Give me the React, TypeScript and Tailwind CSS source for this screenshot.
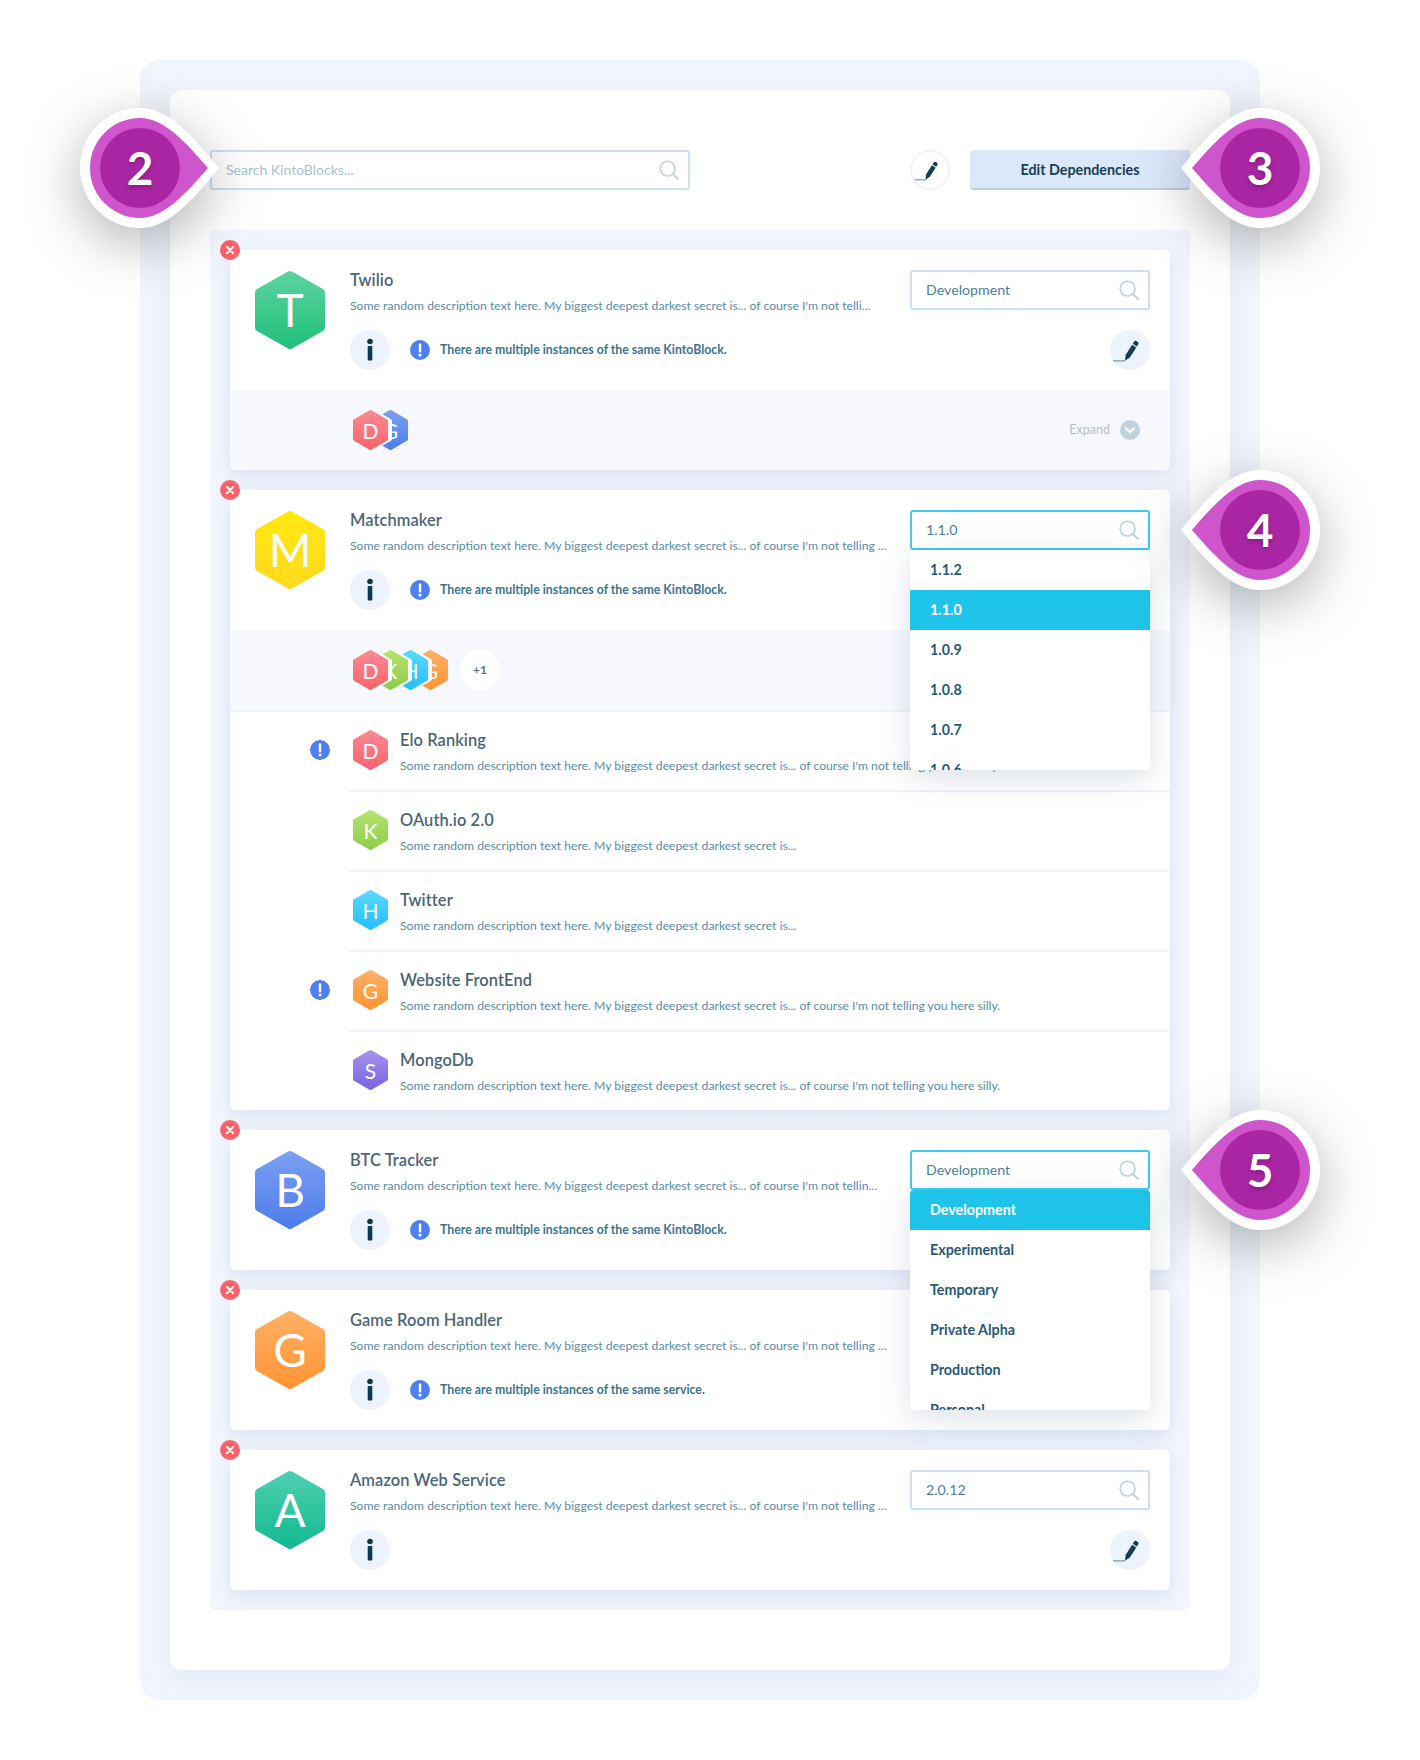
import React from "react";

const DESC = "Some random description text here. My biggest deepest darkest secret is...";
const LONG = `${DESC} of course I'm not telling you here silly.`;

const GRADIENTS: Record<string, [string, string]> = {
  T: ["#5ed3a0", "#1fc07b"],
  M: ["#ffe90f", "#ffd91f"],
  B: ["#7ca0f2", "#4c7cec"],
  G: ["#ffb066", "#ff9433"],
  A: ["#4fd0b0", "#12b98f"],
  D: ["#fb8a95", "#f7636b"],
  K: ["#b8e36f", "#8ccd4a"],
  H: ["#5cd9ff", "#22bffb"],
  S: ["#a592ee", "#7a62e0"],
  g: ["#7ca0f2", "#4c7cec"],
};

const Hexagon: React.FC<{ id: string; letter: string; size: "lg" | "sm"; ring?: boolean }> = ({
  id,
  letter,
  size,
  ring,
}) => {
  const [from, to] = GRADIENTS[id];
  const gid = `hex-${id}-${size}`;
  return (
    <div
      className={`grid place-items-center shrink-0 text-white ${
        size === "lg" ? "w-[70px] h-[78px] mt-[1px] text-[46px]" : "w-[35px] h-[40px] text-[21px]"
      }`}
    >
      <svg viewBox="0 0 70 78" preserveAspectRatio="none" className="[grid-area:1/1] w-full h-full overflow-visible">
        <defs>
          <linearGradient id={gid} x1="35" y1="0" x2="35" y2="78" gradientUnits="userSpaceOnUse">
            <stop offset="0" stopColor={from} />
            <stop offset="1" stopColor={to} />
          </linearGradient>
        </defs>
        {ring && (
          <polygon
            points="35,4 66,21.5 66,56.5 35,74 4,56.5 4,21.5"
            transform="translate(8 0)"
            fill="#ffffff"
            stroke="#ffffff"
            strokeWidth="8"
            strokeLinejoin="round"
          />
        )}
        <polygon
          points="35,4 66,21.5 66,56.5 35,74 4,56.5 4,21.5"
          fill={`url(#${gid})`}
          stroke={`url(#${gid})`}
          strokeWidth="8"
          strokeLinejoin="round"
        />
      </svg>
      <span className="[grid-area:1/1] relative leading-none">{letter}</span>
    </div>
  );
};

const SearchGlyph: React.FC = () => (
  <svg viewBox="0 0 20 20" className="w-[20px] h-[20px] shrink-0" fill="none" stroke="#bfd3e0" strokeWidth="1.6">
    <circle cx="8.6" cy="8.6" r="7.4" />
    <path d="M14 14l5 5" strokeWidth="2" strokeLinecap="round" />
  </svg>
);

const PencilGlyph: React.FC = () => (
  <svg viewBox="0 0 40 40" className="w-[40px] h-[40px]">
    <path d="M3 30.8h12" stroke="#8fb0c4" strokeWidth="1.6" />
    <path d="M15 30.8l.6-5.9 6.5-10.1 4.2 2.7-6.5 10.1z" fill="#123f52" />
    <path d="M22.8 13.8l1.4-2.2c.6-.9 1.6-.9 2.4-.4l1.2.8c.8.5 1 1.6.4 2.4l-1.4 2.1z" fill="#123f52" />
  </svg>
);

const InfoGlyph: React.FC = () => (
  <svg viewBox="0 0 40 40" className="w-[40px] h-[40px]">
    <circle cx="20" cy="11.5" r="2.8" fill="#0e3a50" />
    <rect x="17.7" y="16" width="4.6" height="14.5" fill="#0e3a50" />
  </svg>
);

const WarnGlyph: React.FC = () => (
  <svg viewBox="0 0 20 20" className="w-[20px] h-[20px] shrink-0">
    <circle cx="10" cy="10" r="10" fill="#4f7ff0" />
    <path d="M10 4.4v6.8" stroke="#ffffff" strokeWidth="2.4" strokeLinecap="round" />
    <circle cx="10" cy="14.9" r="1.5" fill="#ffffff" />
  </svg>
);

const RemoveBadge: React.FC = () => (
  <div className="absolute -left-[10px] -top-[10px] w-[20px] h-[20px] rounded-full bg-[#f9636a] flex items-center justify-center">
    <svg viewBox="0 0 10 10" className="w-[10px] h-[10px]">
      <path d="M2 2l6 6M8 2l-6 6" stroke="#ffffff" strokeWidth="2" strokeLinecap="round" />
    </svg>
  </div>
);

const SelectBox: React.FC<{ value: string; active?: boolean; options?: string[]; selected?: string }> = ({
  value,
  active,
  options,
  selected,
}) => (
  <div className="relative w-[240px]">
    <div
      className={`h-[40px] rounded-[3px] border-2 bg-white flex items-center justify-between pl-[14px] pr-[9px] text-[14.2px] text-[#4b7f9c] ${
        active ? "border-[#3ccbf1]" : "border-[#c9e0f4]"
      }`}
    >
      <span>{value}</span>
      <SearchGlyph />
    </div>
    {options && (
      <div className="absolute z-10 left-0 top-full w-[240px] h-[220px] overflow-hidden bg-white rounded-[4px] shadow-[0_8px_30px_rgba(60,90,130,0.18)]">
        {options.map((o) => (
          <div
            key={o}
            className={`h-[40px] shrink-0 flex items-center pl-[20px] pb-[1px] text-[14.3px] font-bold ${
              o === selected ? "bg-[#1fc4ea] text-white" : "text-[#27597a]"
            }`}
          >
            {o}
          </div>
        ))}
      </div>
    )}
  </div>
);

const RoundPencil: React.FC = () => (
  <div className="w-[40px] h-[40px] rounded-full bg-[#edf3fd]">
    <PencilGlyph />
  </div>
);

const Stack: React.FC<{ items: [string, string][]; more?: string }> = ({ items, more }) => (
  <div className="h-full pl-[123px] flex items-center">
    <div className="flex">
      {items.map(([id, letter], i) => (
        <div
          key={id}
          className={`relative ${i > 0 ? "-ml-[15px]" : ""}`}
          style={{ zIndex: items.length - i }}
        >
          <Hexagon id={id} letter={letter} size="sm" ring={i < items.length - 1} />
        </div>
      ))}
    </div>
    {more && (
      <div className="ml-[12px] w-[40px] h-[40px] rounded-full bg-white flex items-center justify-center text-[12px] font-bold text-[#5a7383]">
        {more}
      </div>
    )}
  </div>
);

const CardHead: React.FC<{
  id: string;
  letter: string;
  title: string;
  desc: string;
  warning?: string;
  select: React.ReactNode;
}> = ({ id, letter, title, desc, warning, select }) => (
  <div className="h-[140px] flex pt-[20px] pl-[25px] pr-[20px]">
    <Hexagon id={id} letter={letter} size="lg" />
    <div className="ml-[25px] flex-1 min-w-0">
      <div className="h-[20px] leading-[19px] text-[16.4px] font-semibold tracking-[0.1px] text-[#4a6578]">{title}</div>
      <div className="mt-[6px] h-[20px] leading-[20px] text-[12.2px] text-[#5a8ba8] whitespace-nowrap">{desc}</div>
      <div className="mt-[14px] flex items-center">
        <div className="w-[40px] h-[40px] rounded-full bg-[#edf3fd]">
          <InfoGlyph />
        </div>
        {warning && (
          <div className="ml-[20px] flex items-center gap-[10px]">
            <WarnGlyph />
            <span className="text-[12.3px] font-bold text-[#3d7391]">{warning}</span>
          </div>
        )}
      </div>
    </div>
    <div className="w-[240px] flex flex-col items-end gap-[20px]">
      {select}
      <RoundPencil />
    </div>
  </div>
);

const Dependency: React.FC<{
  id: string;
  letter: string;
  title: string;
  desc: string;
  warn?: boolean;
  last?: boolean;
}> = ({ id, letter, title, desc, warn, last }) => (
  <div className={`flex ${last ? "h-[78px]" : "h-[80px]"}`}>
    <div className="w-[120px] pl-[80px] pt-[28px] shrink-0">{warn && <WarnGlyph />}</div>
    <div className={`flex-1 flex pt-[18px] pl-[3px] ${last ? "" : "border-b-2 border-[#eef3fd]"}`}>
      <Hexagon id={id} letter={letter} size="sm" />
      <div className="ml-[12px]">
        <div className="h-[20px] leading-[19px] text-[16.4px] font-semibold tracking-[0.1px] text-[#4a6578]">{title}</div>
        <div className="mt-[6px] h-[20px] leading-[20px] text-[12.2px] text-[#5a8ba8] whitespace-nowrap">{desc}</div>
      </div>
    </div>
  </div>
);

const Card: React.FC<{ children: React.ReactNode }> = ({ children }) => (
  <div className="relative bg-white rounded-[5px] shadow-[0_6px_20px_rgba(60,100,150,0.12)]">
    <RemoveBadge />
    {children}
  </div>
);

const Callout: React.FC<{ n: string; side: "left" | "right"; pos: string }> = ({ n, side, pos }) => (
  <div className={`absolute z-20 w-[180px] h-[140px] grid place-items-center ${pos}`}>
    <svg
      viewBox="-90 -70 180 140"
      className="[grid-area:1/1] w-[180px] h-[140px] overflow-visible drop-shadow-[0_15px_28px_rgba(0,0,0,0.3)]"
    >
      <g transform={side === "right" ? "scale(-1 1)" : undefined}>
        <path d="M0-60C30-60 54-30 79 0 54 30 30 60 0 60A60 60 0 0 1 0-60Z" fill="#ffffff" />
        <path d="M0-50C25-50 47-24 68 0 47 24 25 50 0 50A50 50 0 0 1 0-50Z" fill="#cf55cc" />
        <circle r="40" fill="#aa25a3" />
      </g>
    </svg>
    <span className="[grid-area:1/1] relative text-[46px] font-bold leading-none text-white [text-shadow:0_2px_4px_rgba(60,0,60,0.35)]">
      {n}
    </span>
  </div>
);

export default function App() {
  return (
    <div className="relative w-[1420px] h-[1760px] bg-white pt-[60px] pl-[140px] [font-family:Lato,sans-serif]">
      <div className="w-[1120px] rounded-[20px] bg-[#f1f5fd] p-[30px]">
        <div className="rounded-[12px] bg-white px-[40px] py-[60px] shadow-[0_10px_30px_rgba(70,110,160,0.08)]">
          <div className="flex items-center h-[40px]">
            <div className="w-[480px] h-[40px] rounded-[3px] border-2 border-[#c9e0f4] flex items-center justify-between pl-[14px] pr-[9px] text-[14px] text-[#a6c2d6]">
              <span className="pb-[2px]">Search KintoBlocks...</span>
              <SearchGlyph />
            </div>
            <div className="ml-[220px] w-[40px] h-[40px] rounded-full border-2 border-[#eef3fd] flex items-center justify-center">
              <PencilGlyph />
            </div>
            <button className="ml-[20px] w-[220px] h-[40px] pt-[1px] rounded-[3px] bg-[#dbe8f9] border-b-2 border-[#bcd0e4] text-[14.3px] font-bold text-[#173f52]">
              Edit Dependencies
            </button>
          </div>

          <div className="mt-[40px] rounded-[5px] bg-[#f1f5fd] p-[20px] flex flex-col gap-[20px]">
            <Card>
              <CardHead
                id="T"
                letter="T"
                title="Twilio"
                desc={`${DESC} of course I'm not telli...`}
                warning="There are multiple instances of the same KintoBlock."
                select={<SelectBox value="Development" />}
              />
              <div className="h-[80px] bg-[#f6f8fd] rounded-b-[5px] flex items-center justify-between pr-[30px]">
                <Stack
                  items={[
                    ["D", "D"],
                    ["g", "G"],
                  ]}
                />
                <div className="flex items-center gap-[10px] text-[12.5px] text-[#b4bfca]">
                  <span className="pt-[1px]">Expand</span>
                  <svg viewBox="0 0 20 20" className="w-[20px] h-[20px]">
                    <circle cx="10" cy="10" r="10" fill="#c2d1de" />
                    <path d="M6 8.5l4 3.5 4-3.5" fill="none" stroke="#ffffff" strokeWidth="2.2" strokeLinecap="round" strokeLinejoin="round" />
                  </svg>
                </div>
              </div>
            </Card>

            <Card>
              <CardHead
                id="M"
                letter="M"
                title="Matchmaker"
                desc={`${DESC} of course I'm not telling ...`}
                warning="There are multiple instances of the same KintoBlock."
                select={
                  <SelectBox
                    value="1.1.0"
                    active
                    selected="1.1.0"
                    options={["1.1.2", "1.1.0", "1.0.9", "1.0.8", "1.0.7", "1.0.6"]}
                  />
                }
              />
              <div className="h-[82px] bg-[#f6f8fd] border-b-2 border-[#eef3fd]">
                <Stack
                  items={[
                    ["D", "D"],
                    ["K", "K"],
                    ["H", "H"],
                    ["G", "G"],
                  ]}
                  more="+1"
                />
              </div>
              <Dependency id="D" letter="D" title="Elo Ranking" desc={LONG} warn />
              <Dependency id="K" letter="K" title="OAuth.io 2.0" desc={DESC} />
              <Dependency id="H" letter="H" title="Twitter" desc={DESC} />
              <Dependency id="G" letter="G" title="Website FrontEnd" desc={LONG} warn />
              <Dependency id="S" letter="S" title="MongoDb" desc={LONG} last />
            </Card>

            <Card>
              <CardHead
                id="B"
                letter="B"
                title="BTC Tracker"
                desc={`${DESC} of course I'm not tellin...`}
                warning="There are multiple instances of the same KintoBlock."
                select={
                  <SelectBox
                    value="Development"
                    active
                    selected="Development"
                    options={["Development", "Experimental", "Temporary", "Private Alpha", "Production", "Personal"]}
                  />
                }
              />
            </Card>

            <Card>
              <CardHead
                id="G"
                letter="G"
                title="Game Room Handler"
                desc={`${DESC} of course I'm not telling ...`}
                warning="There are multiple instances of the same service."
                select={<SelectBox value="Development" />}
              />
            </Card>

            <Card>
              <CardHead
                id="A"
                letter="A"
                title="Amazon Web Service"
                desc={`${DESC} of course I'm not telling ...`}
                select={<SelectBox value="2.0.12" />}
              />
            </Card>
          </div>
        </div>
      </div>

      <Callout n="2" side="left" pos="left-[50px] top-[98px]" />
      <Callout n="3" side="right" pos="left-[1170px] top-[98px]" />
      <Callout n="4" side="right" pos="left-[1170px] top-[460px]" />
      <Callout n="5" side="right" pos="left-[1170px] top-[1100px]" />
    </div>
  );
}
